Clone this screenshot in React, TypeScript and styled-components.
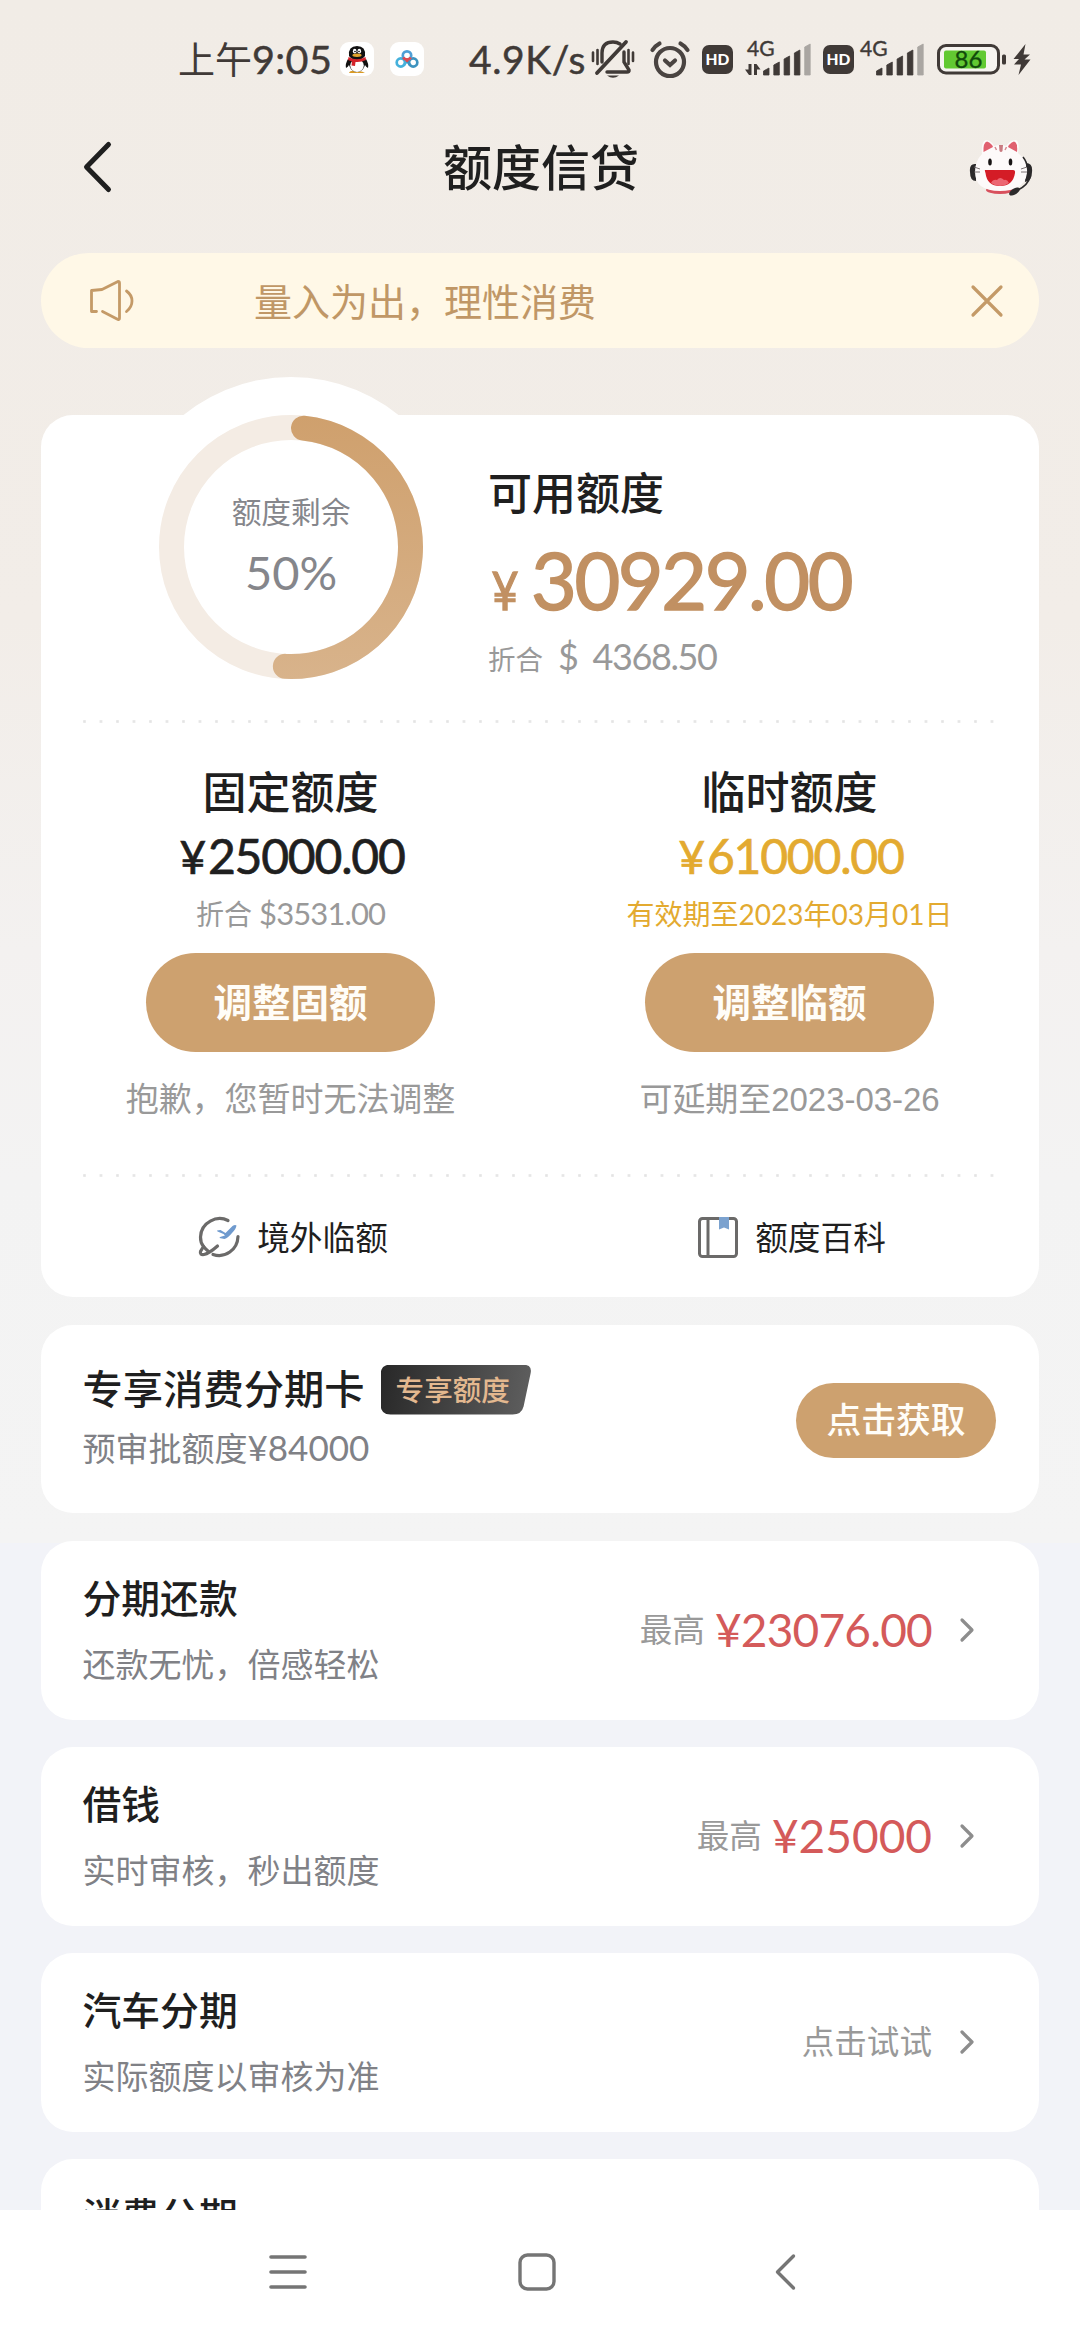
import React from 'react';
import styled, { createGlobalStyle } from 'styled-components';

const cjk = '"Noto Sans CJK SC", "Lato", sans-serif';
const num = '"Lato", "Noto Sans CJK SC", sans-serif';

const GlobalStyle = createGlobalStyle`
  * { box-sizing: border-box; }
  html, body { margin: 0; padding: 0; background: #fff; }
  svg { display: block; flex: none; overflow: visible; }
`;

const Page = styled.div`
  width: 1080px;
  height: 2340px;
  display: flex;
  flex-direction: column;
  overflow: hidden;
  color: #1f1f1f;
  font-family: ${num};
  background: linear-gradient(#f1ece6 0, #f2ede8 620px, #f3f1f0 950px, #f3f3f3 1180px, #f4f4f4 1543px, #f2f3f8 1543px);
  white-space: nowrap;
`;

/* ---------- status bar ---------- */
const StatusBar = styled.div`
  height: 118px;
  flex: none;
  display: flex;
  align-items: center;
  padding-left: 178px;
  color: #403a37;
`;
const Slot = styled.div<{ $gap: number }>`
  margin-left: ${p => p.$gap}px;
  flex: none;
`;
const Clock = styled.div`
  width: 152px;
  display: flex;
  align-items: baseline;
  padding-bottom: 2px;
  font: 400 37px/44px ${cjk};
`;
const ClockDigits = styled.span`
  font: 400 39.5px/44px ${num};
  letter-spacing: 0.4px;
  -webkit-text-stroke: 0.5px currentColor;
`;
const Speed = styled.div`
  width: 115px;
  margin-left: 45px;
  padding-bottom: 1px;
  font: 400 39px/44px ${num};
  letter-spacing: 0.6px;
  -webkit-text-stroke: 0.5px currentColor;
`;
const AppTile = styled.div<{ $gap: number }>`
  width: 34px;
  height: 34px;
  margin-left: ${p => p.$gap}px;
  border-radius: 9px;
  background: #fff;
`;
const HdBadge = styled.div<{ $gap: number }>`
  width: 31px;
  height: 29px;
  margin-left: ${p => p.$gap}px;
  border-radius: 7px;
  background: #403a37;
  color: #fff;
  font: 900 15.5px/29px ${num};
  text-align: center;
`;

const Penguin = () => (
  <svg width="34" height="34" viewBox="0 0 34 34">
    <path d="M9 31 Q10 28 16 29 L17 30.500 Q20 28 25 31 Z" fill="#d99a25" />
    <path d="M8 17 Q5 22 6 26 Q8 25 9 23 Q11 30 17 30 Q23 30 25 23 Q26 25 28 26 Q29 22 26 17 Z" fill="#111" />
    <ellipse cx="17" cy="23.500" rx="6.800" ry="6.500" fill="#fff" />
    <path d="M9 14 Q8 4 17 4 Q26 4 25 14 Q22 18 17 18 Q12 18 9 14Z" fill="#111" />
    <ellipse cx="14.700" cy="9.200" rx="1.800" ry="2.400" fill="#fff" />
    <ellipse cx="19.300" cy="9.200" rx="1.800" ry="2.400" fill="#fff" />
    <circle cx="15" cy="9.500" r=".8" /><circle cx="19" cy="9.500" r=".8" />
    <ellipse cx="17" cy="13.300" rx="4.600" ry="1.700" fill="#e2a42c" />
    <path d="M8.500 15 Q17 19.500 25.500 15 L26 18 Q21 20.500 15.500 20 L15 24 L11.500 23.500 L12 19.500 L8 18 Z" fill="#d3242b" />
  </svg>
);

const CloudLogo = () => (
  <svg width="34" height="34" viewBox="0 0 34 34" fill="none" strokeWidth="2.700">
    <circle cx="10.800" cy="20.500" r="4.100" stroke="#45b1dc" />
    <circle cx="23.200" cy="20.500" r="4.100" stroke="#3d93bf" />
    <circle cx="17" cy="13.500" r="4.200" stroke="#4f9fd6" />
    <path d="M13.200 15.600 Q14.500 17.500 17 17.700 Q19.500 17.500 20.800 15.600" stroke="#df4a50" />
    <path d="M13.500 23.500 L17 19" stroke="#45b1dc" />
    <path d="M17 19 L20.500 23.500" stroke="#3d93bf" />
    <circle cx="17" cy="18.600" r="1.600" fill="#df4a50" />
  </svg>
);

const MuteBell = () => (
  <svg width="44" height="40" viewBox="0 0 44 40" fill="none" stroke="#403a37" strokeWidth="3.400" strokeLinecap="round">
    <path d="M11 23 V14 Q11 3 22 3 Q26 3 29 5" />
    <path d="M35 3 L6 34" strokeWidth="3.800" />
    <path d="M33 13 V23 L38 31 Q38.500 33 36 33 H16" />
    <path d="M16 36.500 H28 Q22 41 16 36.500Z" fill="#403a37" stroke="none" />
    <path d="M2 13.500 V22 M6.500 11 V25 M37.500 11 V25 M42 13.500 V22" strokeWidth="2.600" />
  </svg>
);

const Alarm = () => (
  <svg width="40" height="37" viewBox="0 0 40 37" fill="none" stroke="#4a4441" strokeWidth="4.200" strokeLinecap="round">
    <circle cx="20" cy="21" r="14" />
    <path d="M2.500 9 Q5 5 9.500 2.500 M37.500 9 Q35 5 30.500 2.500" />
    <path d="M15 19.500 L20 24 L25 19.500" />
  </svg>
);

const Signal = ({ arrows }: { arrows?: boolean }) => {
  const x = arrows ? 18.5 : 15.5;
  return (
    <svg width={arrows ? 66 : 63} height="38" viewBox={`0 0 ${arrows ? 66 : 63} 38`}>
      <text x={arrows ? 2 : -1} y="15.500" fontFamily="Lato" fontSize="21" fill="#403a37" stroke="#403a37" strokeWidth=".4">4G</text>
      {arrows && <path d="M6.500 24 V35 H4 L0 29.500 H3.500 V24 Z M9 24 H11.500 L15.500 29.500 H12 V35 H9Z" fill="#403a37" />}
      {[7, 13, 19, 25, 31].map((h, i) => (
        <path key={h} d={`M${x + i * 10.3} ${35} V${38 - h} l5.500 -3 V35 Z`} fill={i === 4 ? '#aaa6a2' : '#403a37'} stroke={i === 4 ? '#aaa6a2' : '#403a37'} strokeWidth=".8" strokeLinejoin="round" />
      ))}
    </svg>
  );
};

const Battery = () => (
  <svg width="70" height="31" viewBox="0 0 70 31">
    <rect x="1.500" y="1.500" width="60" height="27.500" rx="7.500" fill="#f6f4f0" stroke="#403a37" strokeWidth="3" />
    <rect x="7" y="6.500" width="42" height="18" rx="2" fill="#62c932" />
    <rect x="65" y="10.500" width="4" height="10" rx="1.500" fill="#403a37" />
    <text x="17.500" y="24" fontFamily="Lato" fontSize="24" fill="#114a0b" stroke="#114a0b" strokeWidth=".3">86</text>
  </svg>
);

const Bolt = () => (
  <svg width="18" height="31" viewBox="0 0 18 31">
    <path d="M12.500 0 L0.500 15 H6 L1 20.500 H8 L5.500 31 L17.500 15.500 H11.500 L17 10.500 H10.500 Z" fill="#403a37" />
  </svg>
);

/* ---------- header ---------- */
const Header = styled.header`
  height: 98px;
  flex: none;
  display: grid;
  grid-template-columns: 1fr auto 1fr;
  align-items: center;
  padding: 0 48px 0 82px;
`;
const Title = styled.h1`
  margin: -5px 32px 0 0;
  font: 500 49px/60px ${cjk};
`;
const End = styled.div`
  justify-self: end;
  margin-right: -1px;
`;

const Cat = () => (
  <svg width="64" height="58" viewBox="13 11 64 58">
    <path d="M20 37 Q13 36 14 45 Q14 54 20 54 Z M70 36 Q77 36 76 45 Q76 54 69 55 Z" fill="#2c2a2b" />
    <ellipse cx="44" cy="63" rx="14" ry="4" fill="#d8505d" />
    <path d="M26 27 Q25 14 30 13 Q36 14 38 19 Q44 17 50 19 Q54 13 60 13 Q64 15 62 26 Q72 34 71 46 Q69 64 44 64 Q19 64 19 45 Q19 34 26 27 Z" fill="#fdfafa" />
    <path d="M27.500 25 Q27 15.500 31 14.500 Q36 16.500 37 20 Z M61 25 Q62 15.500 58 14.500 Q53 16.500 52 20 Z" fill="#e0606f" />
    <path d="M43 18 h4 l-.5 6 q-1.500 2 -3 0Z" fill="#c97a80" />
    <path d="M39 20 l1.500 3 M50.500 20 l-1.500 3" stroke="#d58d92" strokeWidth="1.500" />
    <ellipse cx="34" cy="35" rx="1.800" ry="3.600" fill="#191515" />
    <ellipse cx="54.500" cy="35" rx="1.800" ry="3.600" fill="#191515" />
    <path d="M29 43 H57 Q59.500 43 59 46 Q57 59 44 59 Q31 59 29.500 46 Q28.500 43 29 43Z" fill="#d41c26" />
    <path d="M35 56 Q37 52 41 53 Q44 49 48 53 Q51 52 53 56 Q49 59 44 59 Q39 59 35 56Z" fill="#ec6672" />
    <path d="M18 40 l6 2 M18 45 h6 M71 40 l-6 2 M71 45 h-6" stroke="#6b6364" strokeWidth=".9" />
    <path d="M67 30 Q71 35 71 40 M74 50 Q72 58 62 63" fill="none" stroke="#2c2a2b" strokeWidth="1.600" />
    <ellipse cx="58.500" cy="64.500" rx="6" ry="3" transform="rotate(-32 58.500 64.500)" fill="#2c2a2b" />
  </svg>
);

/* ---------- notice ---------- */
const Notice = styled.div`
  height: 95px;
  flex: none;
  margin: 37px 41px 0;
  padding: 0 36px 0 48px;
  display: flex;
  align-items: center;
  border-radius: 48px;
  background: #fff8e7;
`;
const NoticeText = styled.div`
  flex: 1;
  margin-left: 121px;
  color: #c09766;
  font: 400 38px/50px ${num};
`;

/* ---------- main card ---------- */
const QuotaCard = styled.section`
  position: relative;
  height: 882px;
  flex: none;
  margin: 67px 41px 0;
  border-radius: 32px;
  background: #fff;
  &::before {
    content: '';
    position: absolute;
    left: 79px;
    top: -38px;
    width: 342px;
    height: 342px;
    border-radius: 50%;
    background: #fff;
  }
`;
const Summary = styled.div`
  position: relative;
  height: 304.500px;
  display: flex;
  gap: 65px;
  padding-left: 118px;
`;
const Ring = styled.div`
  width: 264px;
  height: 264px;
  display: grid;
  > * { grid-area: 1 / 1; }
`;
const RingLabel = styled.div`
  display: flex;
  flex-direction: column;
  align-items: center;
  padding-top: 77px;
  color: #85868b;
  font: 400 29.700px/40px ${num};
`;
const RingValue = styled.div`
  margin-top: 13px;
  font-size: 47px;
  line-height: 54px;
`;
const Available = styled.div`
  padding-top: 46px;
`;
const SectionTitle = styled.div`
  height: 60px;
  font: 500 44px/60px ${cjk};
`;
const BigAmount = styled.div`
  display: flex;
  align-items: baseline;
  height: 80px;
  margin-top: 19px;
  color: #c19062;
  font: 400 79px/80px ${num};
  letter-spacing: -2.400px;
  -webkit-text-stroke: 1.500px currentColor;
`;
const Yen = styled.span`
  width: 43px;
  padding-left: 4px;
  font-size: 53px;
  line-height: 40px;
  transform: scaleX(0.88);
  transform-origin: left;
  -webkit-text-stroke-width: 1.300px;
`;
const Converted = styled.div`
  display: flex;
  align-items: baseline;
  gap: 15px;
  height: 40px;
  margin-top: 16px;
  color: #999;
  font: 400 36px/40px ${num};
  letter-spacing: -1.400px;
`;
const Small = styled.span`
  font-size: 27.500px;
  line-height: 30px;
  letter-spacing: 0;
`;
const Dots = styled.div`
  height: 3px;
  margin: 0 42px;
  background: radial-gradient(circle at 1.500px 1.500px, #e4e4e4 0, #e9e9e9 1.300px, transparent 1.900px) 0 0 / 16.500px 3px repeat-x;
`;
const Columns = styled.div<{ $height: number }>`
  height: ${p => p.$height}px;
  display: grid;
  grid-template-columns: 1fr 1fr;
`;
const Column = styled.div`
  display: flex;
  flex-direction: column;
  align-items: center;
  padding-top: 37px;
`;
const Amount = styled.div<{ $gold?: boolean }>`
  height: 50px;
  margin: 11px 0 0 3px;
  color: ${p => (p.$gold ? '#e3aa30' : '#1f1f1f')};
  font: 400 48px/50px ${num};
  letter-spacing: -1.200px;
  -webkit-text-stroke: 0.700px currentColor;
`;
const AmountYen = styled.span`
  margin-right: 3px;
  font-size: 46px;
  line-height: 40px;
`;
const Caption = styled.div<{ $gold?: boolean }>`
  height: 34px;
  margin-top: 16px;
  display: flex;
  align-items: baseline;
  color: ${p => (p.$gold ? '#e3aa30' : '#999')};
  font: 400 28px/34px ${num};
`;
const CaptionDigits = styled.span`
  font-size: 31px;
  line-height: 30px;
  letter-spacing: -0.900px;
`;
const AdjustButton = styled.button`
  width: 289px;
  height: 99px;
  margin-top: 22px;
  padding: 0 0 5px;
  border: 0;
  border-radius: 50px;
  background: #cda16f;
  color: #fffdf8;
  font: 700 38.500px/60px ${cjk};
`;
const Note = styled.div`
  margin-top: 26px;
  color: #999;
  font: 400 33px/44px "Liberation Sans", "Noto Sans CJK SC", sans-serif;
  letter-spacing: -0.050px;
`;
const LinkItem = styled.div`
  display: flex;
  align-items: center;
  justify-content: center;
  gap: 17px;
  padding: 1px 0 0 5px;
  font: 400 32.700px/44px ${num};
`;

const GoldColor = '#c49a67';

const PlaneIcon = () => (
  <svg width="42" height="42" viewBox="8 13 42 42" fill="none" stroke="#6b6a69" strokeWidth="3.200" strokeLinecap="round">
    <path d="M38 16.500 C27 11 11 18 10.500 33 C10.400 37 11.500 40 13.500 42.500 L10.500 47.500 Q9.500 51 14 50.500 C19 49.500 23 46 27.500 42" />
    <path d="M13.500 42.500 Q16 45.500 18.500 47.500 M48 32.500 C47.500 46 35 54.500 23 50.500" />
    <path d="M27 26.500 L30.500 26 L35.500 29 L42.500 22 Q45 20.500 46.500 21.500 Q46 25 42 29 Q38 34 34.500 35 L29.500 34 L30 33 L35 31.500 L33.500 30 L27.500 27.500 Z" fill="#6f9ace" stroke="none" />
  </svg>
);
const BookIcon = () => (
  <svg width="40" height="42" viewBox="0 0 40 42" fill="none" stroke="#6b6a69" strokeWidth="3">
    <rect x="1.500" y="1.500" width="37" height="38" rx="3" />
    <path d="M10 1.500 V39.500" />
    <path d="M21 0 H31 V12.500 L26 10.500 L21 12.500 Z" fill="#7ba2cf" stroke="none" />
  </svg>
);

/* ---------- product cards ---------- */
const Product = styled.section<{ $height: number; $top: number }>`
  height: ${p => p.$height}px;
  flex: none;
  margin: ${p => p.$top}px 41px 0;
  padding: 0 43px 0 41.500px;
  display: flex;
  justify-content: space-between;
  border-radius: 32px;
  background: #fff;
`;
const PromoText = styled.div`
  padding-top: 36px;
`;
const PromoHead = styled.div`
  display: flex;
  align-items: center;
  gap: 16px;
  height: 58px;
  font: 500 40.300px/54px ${cjk};
`;
const PromoName = styled.span`
  margin-top: -6px;
`;
const Badge = styled.span`
  width: 151px;
  height: 50px;
  margin-top: -1px;
  padding-left: 15px;
  clip-path: path('M10 0 H142 Q152 0 150 9 L143 42 Q141 50 132 50 H10 Q0 50 0 40 V10 Q0 0 10 0Z');
  background: linear-gradient(100deg, #282828, #606060);
  color: #e3b88f;
  font: 500 28.600px/48px ${cjk};
`;
const Sub = styled.div<{ $top: number }>`
  height: 44px;
  margin-top: ${p => p.$top}px;
  color: #808186;
  font: 400 33px/44px ${num};
`;
const SubDigits = styled.span`
  font-size: 35px;
  line-height: 30px;
`;
const GetButton = styled.button`
  width: 200px;
  height: 75px;
  margin-top: 58px;
  padding: 0 0 5px;
  border: 0;
  border-radius: 38px;
  background: #cda16f;
  color: #fffdf8;
  font: 500 34.800px/50px ${cjk};
`;
const RowText = styled.div`
  padding-top: 29px;
`;
const RowName = styled.div`
  font: 500 38.800px/53px ${cjk};
`;
const RowEnd = styled.div`
  display: flex;
  align-items: center;
  padding: 0 21px 2px 0;
  color: #999;
  font: 400 32.600px/50px ${num};
`;
const RowAmount = styled.span<{ $tight: boolean }>`
  margin-left: 10px;
  color: #d45a5a;
  font-size: 46px;
  letter-spacing: ${p => (p.$tight ? -0.8 : 0)}px;
`;
const Arrow = styled.svg`
  margin: 1px 0 0 27px;
`;

const NavBar = styled.nav`
  position: fixed;
  left: 0;
  top: 2210px;
  width: 1080px;
  height: 130px;
  padding: 0 284px 6px 269px;
  display: flex;
  align-items: center;
  justify-content: space-between;
  background: #fff;
`;
const HomeIcon = styled.svg`
  margin-right: 8px;
`;

const rows = [
  { name: '分期还款', sub: '还款无忧，倍感轻松', hint: '最高', amount: '¥23076.00' },
  { name: '借钱', sub: '实时审核，秒出额度', hint: '最高', amount: '¥25000' },
  { name: '汽车分期', sub: '实际额度以审核为准', hint: '点击试试' },
  { name: '消费分期' },
];

const polar = (deg: number) => {
  const a = ((deg - 90) * Math.PI) / 180;
  return `${132 + 119.5 * Math.cos(a)} ${132 + 119.5 * Math.sin(a)}`;
};

export default function App() {
  return (
    <Page>
      <GlobalStyle />
      <StatusBar>
        <Clock>上午<ClockDigits>9:05</ClockDigits></Clock>
        <AppTile $gap={10}><Penguin /></AppTile>
        <AppTile $gap={16}><CloudLogo /></AppTile>
        <Speed>4.9K/s</Speed>
        <Slot $gap={7}><MuteBell /></Slot>
        <Slot $gap={15}><Alarm /></Slot>
        <HdBadge $gap={12}>HD</HdBadge>
        <Slot $gap={12}><Signal arrows /></Slot>
        <HdBadge $gap={12}>HD</HdBadge>
        <Slot $gap={7}><Signal /></Slot>
        <Slot $gap={13}><Battery /></Slot>
        <Slot $gap={6}><Bolt /></Slot>
      </StatusBar>

      <Header>
        <svg width="28" height="50" viewBox="0 0 28 50" fill="none" stroke="#1f1f1f" strokeWidth="5" strokeLinecap="round" strokeLinejoin="round">
          <path d="M26.500 2.500 L4.500 25 L26.500 47.500" />
        </svg>
        <Title>额度信贷</Title>
        <End><Cat /></End>
      </Header>

      <Notice>
        <svg width="44" height="42" viewBox="0 0 44 42" fill="none" stroke={GoldColor} strokeWidth="2.800" strokeLinecap="round" strokeLinejoin="round">
          <path d="M7.500 31.500 H2.500 V10.500 L13 9.500 L29 1.500 Q30.500 1.500 30.500 3 V38 Q30.500 40 29 39.500 L13.500 31.500" />
          <path d="M37.500 11 Q43 15 43 21 Q43 27 37.500 31.500" />
        </svg>
        <NoticeText>量入为出，理性消费</NoticeText>
        <svg width="32" height="32" viewBox="0 0 32 32" stroke={GoldColor} strokeWidth="3.200" strokeLinecap="round">
          <path d="M2 2 L30 30 M30 2 L2 30" />
        </svg>
      </Notice>

      <QuotaCard>
        <Summary>
          <Ring>
            <svg width="264" height="264" viewBox="0 0 264 264" fill="none">
              <defs>
                <linearGradient id="arc" x1="0" y1="0" x2="0" y2="264" gradientUnits="userSpaceOnUse">
                  <stop stopColor="#cfa06d" />
                  <stop offset="1" stopColor="#d8b38b" />
                </linearGradient>
              </defs>
              <circle cx="132" cy="132" r="119.500" stroke="#f4ece4" strokeWidth="25" />
              <path d={`M${polar(6)} A119.5 119.5 0 0 1 ${polar(182.7)}`} stroke="url(#arc)" strokeWidth="25" strokeLinecap="round" />
            </svg>
            <RingLabel>
              额度剩余
              <RingValue>50%</RingValue>
            </RingLabel>
          </Ring>
          <Available>
            <SectionTitle>可用额度</SectionTitle>
            <BigAmount><Yen>¥</Yen>30929.00</BigAmount>
            <Converted><Small>折合</Small><span>$</span><span>4368.50</span></Converted>
          </Available>
        </Summary>
        <Dots />
        <Columns $height={451.5}>
          <Column>
            <SectionTitle>固定额度</SectionTitle>
            <Amount><AmountYen>¥</AmountYen>25000.00</Amount>
            <Caption>折合&nbsp;<CaptionDigits>$3531.00</CaptionDigits></Caption>
            <AdjustButton>调整固额</AdjustButton>
            <Note>抱歉，您暂时无法调整</Note>
          </Column>
          <Column>
            <SectionTitle>临时额度</SectionTitle>
            <Amount $gold><AmountYen>¥</AmountYen>61000.00</Amount>
            <Caption $gold>有效期至2023年03月01日</Caption>
            <AdjustButton>调整临额</AdjustButton>
            <Note>可延期至2023-03-26</Note>
          </Column>
        </Columns>
        <Dots />
        <Columns $height={120}>
          <LinkItem><PlaneIcon />境外临额</LinkItem>
          <LinkItem><BookIcon />额度百科</LinkItem>
        </Columns>
      </QuotaCard>

      <Product $height={188} $top={28}>
        <PromoText>
          <PromoHead><PromoName>专享消费分期卡</PromoName><Badge>专享额度</Badge></PromoHead>
          <Sub $top={7}>预审批额度<SubDigits>¥84000</SubDigits></Sub>
        </PromoText>
        <GetButton>点击获取</GetButton>
      </Product>

      {rows.map((r, i) => (
        <Product key={r.name} $height={179} $top={i === 0 ? 28 : 27}>
          <RowText>
            <RowName>{r.name}</RowName>
            {r.sub && <Sub $top={19}>{r.sub}</Sub>}
          </RowText>
          {r.hint && (
            <RowEnd>
              {r.hint}
              {r.amount && <RowAmount $tight={r.amount.includes('.')}>{r.amount}</RowAmount>}
              <Arrow width="16" height="26" viewBox="0 0 16 26" fill="none" stroke="#8d8d8d" strokeWidth="3.200" strokeLinecap="round" strokeLinejoin="round">
                <path d="M3 3 L13 13 L3 23" />
              </Arrow>
            </RowEnd>
          )}
        </Product>
      ))}

      <NavBar>
        <svg width="38" height="36" viewBox="0 0 38 36" stroke="#757575" strokeWidth="3.600" strokeLinecap="round">
          <path d="M2 3 H36 M2 18 H36 M2 33 H36" />
        </svg>
        <HomeIcon width="38" height="38" viewBox="0 0 38 38" fill="none" stroke="#757575" strokeWidth="3.400">
          <rect x="2" y="2" width="34" height="34" rx="7.500" />
        </HomeIcon>
        <svg width="21" height="36" viewBox="0 0 21 36" fill="none" stroke="#757575" strokeWidth="3.400" strokeLinecap="round" strokeLinejoin="round">
          <path d="M18.500 2 L2.500 18 L18.500 34" />
        </svg>
      </NavBar>
    </Page>
  );
}
